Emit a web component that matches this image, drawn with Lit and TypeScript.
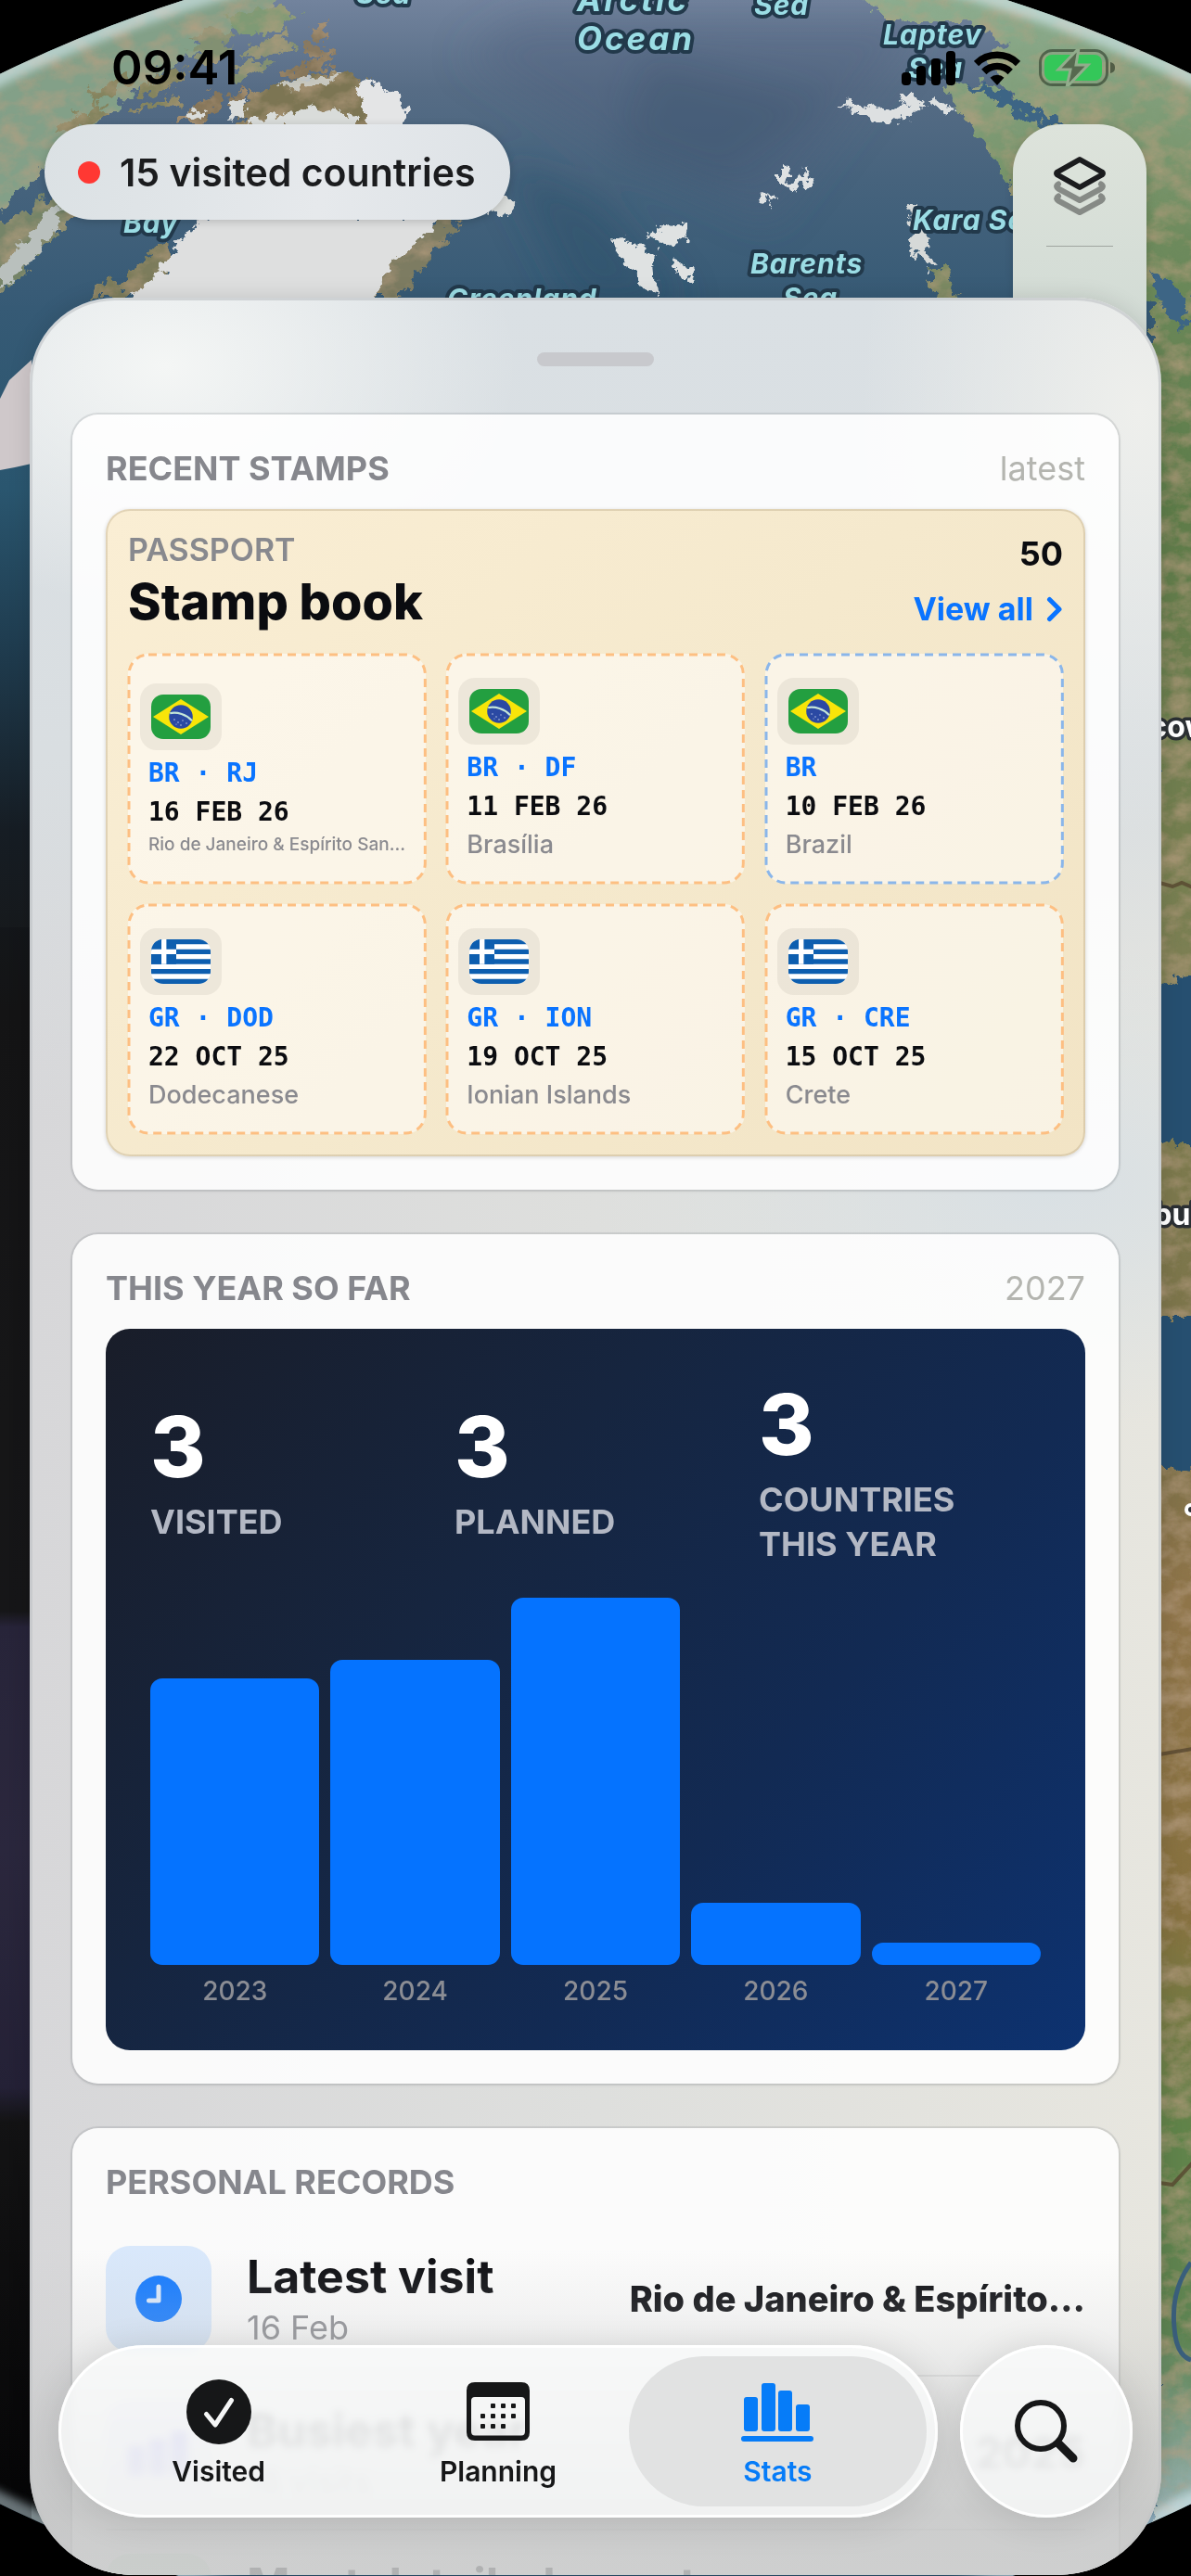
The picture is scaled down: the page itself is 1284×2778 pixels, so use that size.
import { LitElement, html, svg, css } from "lit";
import { customElement, property } from "lit/decorators.js";

type FlagCode = "br" | "gr";

interface Stamp {
  flag: FlagCode;
  code: string;
  date: string;
  place: string;
  small?: boolean;
  whole?: boolean;
}

const STAMPS: Stamp[] = [
  { flag: "br", code: "BR · RJ", date: "16 FEB 26", place: "Rio de Janeiro & Espírito San…", small: true },
  { flag: "br", code: "BR · DF", date: "11 FEB 26", place: "Brasília" },
  { flag: "br", code: "BR", date: "10 FEB 26", place: "Brazil", whole: true },
  { flag: "gr", code: "GR · DOD", date: "22 OCT 25", place: "Dodecanese" },
  { flag: "gr", code: "GR · ION", date: "19 OCT 25", place: "Ionian Islands" },
  { flag: "gr", code: "GR · CRE", date: "15 OCT 25", place: "Crete" },
];

const TOTALS = [
  { value: 3, label: "Visited" },
  { value: 3, label: "Planned" },
  { value: 3, label: "Countries this year" },
];

const YEARS = [
  { year: 2023, share: 78 },
  { year: 2024, share: 83 },
  { year: 2025, share: 100 },
  { year: 2026, share: 17 },
  { year: 2027, share: 6 },
];

const brazil = svg`
  <rect width="64" height="48" rx="13" fill="#239f40"/>
  <path d="M32 5 62 24 32 43 2 24Z" fill="#f8e509"/>
  <circle cx="32" cy="24" r="12.8" fill="#2b49a3"/>
  <path d="M20.2 20.2C28 18.4 38 21.6 44 28.2" fill="none" stroke="#c5e6d8" stroke-width="2.2"/>
  <g fill="#b9c6ea"><circle cx="25" cy="27" r=".8"/><circle cx="29" cy="30" r=".8"/><circle cx="34" cy="28" r=".7"/><circle cx="32" cy="33" r=".8"/><circle cx="38" cy="31" r=".8"/><circle cx="27" cy="32" r=".6"/></g>`;

const greece = svg`
  <clipPath id="g"><rect width="64" height="48" rx="13"/></clipPath>
  <g clip-path="url(#g)">
    <rect width="64" height="48" fill="#fff"/>
    <path d="M0 0h64v5.3H0zM0 10.7h64V16H0zM0 21.3h64v5.4H0zM0 32h64v5.3H0zM0 42.7h64V48H0z" fill="#0d5eaf"/>
    <path d="M0 0h27v26.700H0z" fill="#0d5eaf"/>
    <path d="M11 0h5.400v26.700H11zM0 10.700h27V16H0z" fill="#fff"/>
  </g>`;

@customElement("globe-map")
class GlobeMap extends LitElement {
  static styles = css`
    :host { display: block; height: 100%; }
    .map { display: block; width: 100%; height: 100%; }
    .sea { font: italic 700 30px Inter, "Liberation Sans", sans-serif; letter-spacing: 1px; fill: #9bdde5; stroke: #22394b; stroke-width: 8px; stroke-linejoin: round; paint-order: stroke; }
    .big { font-size: 35px; letter-spacing: 3px; }
    .city { font: 700 32px Inter, "Liberation Sans", sans-serif; fill: #fff; stroke: #2b2f33; stroke-width: 7px; stroke-linejoin: round; paint-order: stroke; }
  `;

  render() {
    return html`
      <svg class="map" viewBox="0 0 1284 2778" preserveAspectRatio="xMidYMin slice" aria-hidden="true">
        <defs>
          <clipPath id="disc"><circle cx="642" cy="1390" r="1459"/></clipPath>
          <linearGradient id="ocean" x1="0" y1="0" x2="0" y2="1">
            <stop offset="0" stop-color="#72839d"/><stop offset=".035" stop-color="#566c85"/>
            <stop offset=".07" stop-color="#46637d"/><stop offset=".12" stop-color="#365a75"/>
            <stop offset="1" stop-color="#264d68"/>
          </linearGradient>
          <linearGradient id="night" x1="0" y1="0" x2="0" y2="1">
            <stop offset="0" stop-color="#365a75"/><stop offset=".08" stop-color="#2a566f"/>
            <stop offset=".15" stop-color="#1f3c4f"/><stop offset=".23" stop-color="#161d24"/>
            <stop offset=".31" stop-color="#171717"/><stop offset=".575" stop-color="#1a1a1b"/>
            <stop offset=".582" stop-color="#2f2b44"/><stop offset=".68" stop-color="#332f49"/>
            <stop offset=".785" stop-color="#2b2740"/><stop offset=".8" stop-color="#161616"/>
            <stop offset="1" stop-color="#020202"/>
          </linearGradient>
          <linearGradient id="east" x1="0" y1="0" x2="0" y2="1">
            <stop offset="0" stop-color="#8faf93"/><stop offset=".05" stop-color="#7f9c77"/>
            <stop offset=".1" stop-color="#6d8a5c"/><stop offset=".2" stop-color="#5d7c4a"/>
            <stop offset=".37" stop-color="#7b7f52"/><stop offset=".56" stop-color="#7d7149"/>
            <stop offset=".62" stop-color="#8f7449"/><stop offset=".74" stop-color="#86713f"/>
            <stop offset=".82" stop-color="#61834a"/><stop offset=".9" stop-color="#5d8352"/>
            <stop offset=".97" stop-color="#9ab3b4"/>
          </linearGradient>
          <filter id="coast" x="-5%" y="-5%" width="110%" height="110%">
            <feTurbulence type="fractalNoise" baseFrequency=".09" numOctaves="4" seed="4"/>
            <feDisplacementMap in="SourceGraphic" scale="22" xChannelSelector="R" yChannelSelector="G"/>
          </filter>
          <filter id="land" x="-5%" y="-5%" width="110%" height="110%">
            <feTurbulence type="fractalNoise" baseFrequency=".08" numOctaves="4" seed="9" result="n"/>
            <feDisplacementMap in="SourceGraphic" in2="n" scale="26" xChannelSelector="R" yChannelSelector="G" result="shape"/>
            <feTurbulence type="fractalNoise" baseFrequency=".035 .05" numOctaves="5" seed="2"/>
            <feColorMatrix values="0 0 0 0 .48  0 0 0 0 .35  0 0 0 0 .22  1.3 0 0 0 -.5"/>
            <feComposite in2="shape" operator="in" result="tint"/>
            <feMerge><feMergeNode in="shape"/><feMergeNode in="tint"/></feMerge>
          </filter>
          <filter id="soft"><feGaussianBlur stdDeviation="20"/></filter>
          <filter id="haze"><feGaussianBlur stdDeviation="5"/></filter>
        </defs>
        <rect width="1284" height="2778" fill="#000"/>
        <g clip-path="url(#disc)">
          <rect width="1284" height="2778" fill="url(#ocean)"/>
          <path d="M0 330H60V2778H0z" fill="url(#night)"/>
          <g filter="url(#soft)">
            <path d="M560 20H1000L830 240 640 150 500 60z" fill="#4d617c" opacity=".4"/>
            <path d="M540 170 620 330H740L650 220z" fill="#2b4d68" opacity=".5"/>
            <path d="M700 60 900 110 780 200 660 170z" fill="#3b536c" opacity=".4"/>
          </g>
          <g filter="url(#land)">
            <path d="M-30 60 200-30H330L270 25 200 60 150 95 80 150 40 190 0 225-40 230z" fill="#83a088"/>
            <path d="M-20 250 60 210 90 222 60 250 20 300-20 340z" fill="#748468"/>
            <path d="M245 20 290 5 322 16 285 38 255 36z" fill="#7f9a75"/>
            <path d="M332 30 352 22 354 44 338 42zM330 48l26 4-4 12-22-6z" fill="#8a7a60"/>
            <path d="M255 60 305 34 318 50 270 64zM230 30l25 8-30 14-22-4zM205 62l30-18 16 8-30 22zM250 74l40-10 4 8-40 14z" fill="#829072"/>
            <path d="M150 92 196 70 198 86 150 104zM140 118l52-16 2 12-48 6zM96 100l40-20 6 10-42 26zM60 135l50-22 8 10-56 24z" fill="#84845f"/>
            <path d="M306 78l50-20 4 12-44 16zM200 118l36-20 6 14-32 22zM246 106l16-12 4 14-16 10z" fill="#86765a"/>
            <path d="M270 100 320 86 360 76 400 92 400 140H250z" fill="#7c7453"/>
            <path d="M190 130l30-14 4 18h-30z" fill="#86765a"/>
            <path d="M146 285 180 262 182 290 150 321H95l20-20 16 10z" fill="#7b7c5c"/>
            <path d="M470 236 500 240 470 270 430 321H395l20-50z" fill="#7d7c62"/>
          </g>
          <g filter="url(#coast)">
            <path d="M382 92 402 86 424 100 438 118 434 142H396L396 118z" fill="#e4e5e6"/>
            <path d="M300 90 330 82 372 80 352 92 312 98z" fill="#d5d8d6" opacity=".8"/>
            <path d="M250 108l16-4-4 24-14 2zM200 126l22-8-4 14zM272 128l44-8 26-6 40 10v14H268z" fill="#d9dcda"/>
            <path d="M225 232H478L452 260 420 285 402 330H130L172 294 190 262z" fill="#dedfdf"/>
            <path d="M540 212 556 218 548 232 530 228z" fill="#d9dcda"/>
            <path d="M52 228 66 222 60 250 20 296 0 310V290z" fill="#b9c0bd"/>
            <path d="M902 112l30 2 20 6 20-8 14 4-6 12-30 6-20-8zM968 104l20 0 14 14-22-2zM1000 104l34 14-10 6-20-12z" fill="#dde0e1"/>
            <path d="M844 176l10 8-4 18-10-4zM846 200l28-12 4 8-22 10zM818 206l16 6-4 8-14-4zM868 180l6 12-8 6zM836 188h8v8h-8z" fill="#dfe2e3"/>
            <path d="M660 256 688 262 706 280 708 318 700 316 686 300 664 272zM702 246l40-6-4 18-26 8-14-8zM722 278l26 12-4 12-14-8z" fill="#dfe2e2"/>
            <path d="M978 222l12-4 8 24 2 34-14-4zM990 264l20 20-8 6-14-12z" fill="#d6d9d8"/>
          </g>
          <path d="M0 430 10 410 34 388V500L16 504 0 507z" fill="#cfc8ca"/>
          <g filter="url(#land)">
            <path d="M900-20H1090L1330 80V2800H1244V330L1100 230 1080 180 1044 132 1018 92 1060 90 1100 110 1060 58 1090 50 1040 22 960 22z" fill="url(#east)"/>
            <path d="M1000 288l20 0 12 40H1010z" fill="#7b8a64"/>
          </g>
          <g filter="url(#coast)">
            <path d="M1040 90 1110 130 1180 150 1124 122 1084 96zM1240 290l40 30-6 40-24-36z" fill="#3d6585"/>
            <path d="M1240 1065 1300 1045V1235L1240 1230zM1240 1420h70v170l-70-10z" fill="#264f70"/>
          </g>
          <path d="M1250 952l14 4 10-4 12 5M1250 1892l36-6M1250 2354l14 2 22-24" fill="none" stroke="#57472f" stroke-width="4" opacity=".8"/>
          <path d="M1284 2440Q1262 2470 1266 2510 1268 2540 1284 2545" fill="none" stroke="#3a5f7c" stroke-width="5"/>
          <circle cx="642" cy="1390" r="1457" fill="none" stroke="#d5ecf3" stroke-width="20" filter="url(#haze)" opacity=".6"/>
          <path d="M0 1000H34V2778H0z" fill="#0c0c0d" opacity=".2"/>
        </g>
        <text class="sea" x="384" y="4">Sea</text>
        <text class="sea big" x="622" y="12">Arctic</text>
        <text class="sea big" x="622" y="54">Ocean</text>
        <text class="sea" x="813" y="16">Sea</text>
        <text class="sea" x="952" y="48">Laptev</text>
        <text class="sea" x="979" y="84">Sea</text>
        <text class="sea" x="984" y="248">Kara Sea</text>
        <text class="sea" x="809" y="295">Barents</text>
        <text class="sea" x="844" y="332">Sea</text>
        <text class="sea" x="482" y="333">Greenland</text>
        <text class="sea" x="133" y="251">Bay</text>
        <text class="city" x="1172" y="795">Moscow</text>
        <text class="city" x="1166" y="1321">Istanbul</text>
        <circle cx="1284" cy="1628" r="5" fill="#2b2f33" stroke="#fff" stroke-width="4"/>
      </svg>`;
  }
}

@customElement("passport-stamp")
class PassportStamp extends LitElement {
  @property({ attribute: false }) stamp!: Stamp;

  static styles = css`
    :host { display: block; min-width: 0; }
    .stamp { position: relative; box-sizing: border-box; height: 248px; padding: 4px 13px 0; border-radius: 22px; background: rgba(255, 255, 255, 0.52); display: flex; flex-direction: column; justify-content: center; }
    .edge { position: absolute; inset: 0; width: 100%; height: 100%; overflow: visible; }
    .edge rect { x: 1px; y: 1px; width: calc(100% - 2px); height: calc(100% - 2px); fill: none; stroke: #fdbf82; stroke-width: 3px; stroke-dasharray: 9 6; }
    .whole .edge rect { stroke: #8ab6ea; }
    .tile { width: 88px; height: 72px; border-radius: 18px; background: rgba(120, 110, 100, 0.1); display: grid; place-items: center; margin-bottom: 4px; }
    .flag { width: 64px; height: 48px; display: block; }
    .line { margin: 0; padding: 0 0 0 9px; font: 700 28px/42px "DejaVu Sans Mono", "Liberation Mono", monospace; color: #0b0c10; white-space: nowrap; }
    .code { color: #0a74ff; }
    .place { font: 500 27px/40px Inter, "Liberation Sans", sans-serif; color: #8a8a8f; overflow: hidden; text-overflow: ellipsis; }
    .small { font-size: 19px; line-height: 28px; }
  `;

  render() {
    const s = this.stamp;
    return html`
      <div class="stamp ${s.whole ? "whole" : ""}">
        <svg class="edge" aria-hidden="true"><rect rx="21"/></svg>
        <div class="tile"><svg class="flag" viewBox="0 0 64 48" aria-hidden="true">${s.flag === "br" ? brazil : greece}</svg></div>
        <p class="line code">${s.code}</p>
        <p class="line">${s.date}</p>
        <p class="line place ${s.small ? "small" : ""}">${s.place}</p>
      </div>`;
  }
}

@customElement("app-root")
class AppRoot extends LitElement {
  static styles = css`
    :host { display: block; height: 100vh; overflow: hidden; font-family: Inter, "Liberation Sans", sans-serif; color: #0b0c10; background: #000; }
    .screen { position: relative; height: 100%; display: flex; flex-direction: column; }
    .backdrop { position: absolute; inset: 0; }
    h2, h3, p { margin: 0; }
    button { font: inherit; color: inherit; border: 0; background: none; padding: 0; cursor: pointer; }
    a { text-decoration: none; }
    ul { list-style: none; margin: 0; padding: 0; }

    .top { position: relative; flex: none; height: 321px; display: flex; flex-direction: column; }
    .status { flex: none; height: 134px; box-sizing: border-box; padding: 12px 82px 0 120px; display: flex; align-items: center; justify-content: space-between; }
    .time { font-size: 51px; line-height: 60px; font-weight: 600; color: #000; }
    .signals { display: flex; gap: 20px; align-items: center; }
    .signals svg { display: block; }
    .controls { display: flex; justify-content: space-between; align-items: flex-start; padding: 0 48px; }
    .pill { height: 103px; border-radius: 52px; padding: 0 38px 0 36px; display: flex; align-items: center; gap: 21px; background: linear-gradient(100deg, #dbe1e4, #e6e9ec 60%, #dde2e6); box-shadow: 0 2px 10px rgba(0, 0, 0, 0.18); font-size: 41px; font-weight: 600; color: #1b1c1e; white-space: nowrap; }
    .dot { width: 24px; height: 24px; border-radius: 50%; background: #ff3833; }
    .tools { width: 144px; height: 280px; box-sizing: border-box; border-radius: 52px 52px 0 0; padding-top: 34px; display: flex; flex-direction: column; align-items: center; gap: 33px; background: linear-gradient(#dde3db, #cfd9d3); box-shadow: 0 2px 10px rgba(0, 0, 0, 0.15); }
    .tools svg { display: block; }
    .rule { width: 72px; height: 1px; background: #a0a5a0; }

    .sheet { position: relative; flex: 1; min-height: 0; margin: 0 32px 1px; border-radius: 92px 92px 112px 112px; overflow: hidden; box-shadow: inset 0 0 0 3px rgba(190, 194, 196, 0.6), 0 0 24px rgba(0, 0, 0, 0.12);
      background:
        radial-gradient(ellipse 380px 260px at 12% 3%, #f4f6f5, rgba(244, 246, 245, 0)),
        radial-gradient(ellipse 300px 460px at 98% 5%, #eeefec, rgba(238, 239, 236, 0)),
        radial-gradient(ellipse 500px 260px at 90% 39%, #d9e0e4, rgba(217, 224, 228, 0)),
        linear-gradient(#dae0e4, #d9dee1 20%, rgba(217, 222, 225, 0) 36%),
        linear-gradient(90deg, #d7d7d9, #dedfdd 50%, #e7e6df); }
    .scroll { box-sizing: border-box; padding: 59px 46px 0; display: flex; flex-direction: column; gap: 48px; }
    .handle { align-self: center; width: 126px; height: 15px; border-radius: 8px; background: #c8c9cd; margin-bottom: 4px; }
    .card { box-sizing: border-box; border-radius: 28px; padding: 36px; background: rgba(255, 255, 255, 0.87); box-shadow: 0 0 0 2px rgba(120, 125, 130, 0.16), 0 1px 4px rgba(0, 0, 0, 0.1); }
    .head { display: flex; justify-content: space-between; margin-bottom: 22px; line-height: 44px; }
    .title { font-size: 36px; font-weight: 700; color: #86878d; text-transform: uppercase; }
    .note { font-size: 36px; font-weight: 400; color: #b4b5b0; }

    .passport { border-radius: 26px; padding: 24px; background: linear-gradient(135deg, #faeed4, #f5e9cd 50%, #f2e4c5); box-shadow: inset 0 0 0 2px rgba(150, 130, 90, 0.24), 0 1px 4px rgba(0, 0, 0, 0.16); }
    .intro { display: flex; justify-content: space-between; margin-bottom: 24px; }
    .names { display: flex; flex-direction: column; gap: 4px; }
    .eyebrow { font-size: 34px; line-height: 40px; font-weight: 600; color: #88898e; text-transform: uppercase; }
    .book { font-size: 54px; line-height: 64px; font-weight: 800; }
    .side { display: flex; flex-direction: column; align-items: flex-end; justify-content: center; gap: 16px; line-height: 44px; }
    .count { font-size: 36px; font-weight: 700; }
    .more { display: flex; align-items: center; gap: 14px; font-size: 34px; font-weight: 700; color: #0a74ff; }
    .stamps { display: grid; grid-template-columns: repeat(3, 1fr); gap: 22px; }

    .year { border-radius: 26px; padding: 48px; color: #fff; background: linear-gradient(130deg, #191d29, #16253f 35%, #122a53 65%, #0d3270); }
    .totals { display: grid; grid-template-columns: repeat(3, 1fr); gap: 24px; align-items: center; min-height: 208px; margin-bottom: 34px; }
    .big { font-size: 91px; line-height: 110px; font-weight: 800; margin-bottom: 2px; }
    .label { max-width: 8em; font-size: 36px; line-height: 48px; font-weight: 700; text-transform: uppercase; color: #b3b8c4; }
    .bars { display: grid; grid-template-columns: repeat(5, 1fr); gap: 12px; }
    .slot { height: 396px; display: flex; align-items: flex-end; margin-bottom: 12px; }
    .bar { width: 100%; border-radius: 13px; background: #0573ff; }
    .tick { text-align: center; font-size: 28px; line-height: 32px; font-weight: 500; color: #8b8d94; }

    .row { display: flex; align-items: center; padding: 25px 0; gap: 38px; border-bottom: 2px solid rgba(60, 60, 67, 0.12); }
    .badge { flex: none; width: 114px; height: 114px; border-radius: 26px; display: grid; place-items: center; background: #d9e8fb; }
    .violet { background: #e6e4fd; }
    .green { background: #dcefdf; }
    .facts { flex: 1; white-space: nowrap; }
    .name { font-size: 50px; line-height: 62px; font-weight: 700; }
    .when { font-size: 36px; line-height: 48px; color: #8e8f94; }
    .value { font-size: 46px; line-height: 56px; font-weight: 700; }
    .long { font-size: 38px; font-weight: 800; }
    .mist { position: absolute; left: 0; right: 0; bottom: 0; height: 350px; pointer-events: none; background: linear-gradient(rgba(206, 207, 207, 0), rgba(202, 203, 203, 0.22) 24%, rgba(198, 199, 199, 0.5) 46%, rgba(196, 197, 197, 0.86) 80%, rgba(200, 201, 201, 0.88)); }

    .dock { position: absolute; left: 63px; right: 63px; bottom: 63px; display: flex; gap: 24px; }
    .tabs, .search { box-sizing: border-box; height: 186px; border-radius: 93px; background: rgba(250, 251, 251, 0.8); backdrop-filter: blur(4px); box-shadow: inset 0 0 0 3px rgba(255, 255, 255, 0.9), 0 4px 40px rgba(0, 0, 0, 0.12); }
    .tabs { flex: 1; padding: 12px 22px; display: grid; grid-template-columns: repeat(3, 1fr); }
    .tab { margin: 0 -10px; border-radius: 81px; display: flex; flex-direction: column; align-items: center; justify-content: center; gap: 8px; padding-top: 5px; font-size: 30px; line-height: 40px; font-weight: 600; color: #161718; }
    .on { background: rgba(222, 223, 223, 0.92); color: #067cf8; }
    .tab svg { display: block; height: 72px; }
    .search { flex: none; width: 186px; display: grid; place-items: center; }
  `;

  render() {
    return html`
      <main class="screen">
        <globe-map class="backdrop"></globe-map>
        <header class="top">
          <div class="status">
            <span class="time">09:41</span>
            <div class="signals">
              <svg width="58" height="38" viewBox="0 0 58 38" role="img" aria-label="Signal"><rect y="24" width="10" height="14" rx="4"/><rect x="16" y="17" width="10" height="21" rx="4"/><rect x="32" y="9" width="10" height="29" rx="4"/><rect x="48" y="1" width="10" height="37" rx="4"/></svg>
              <svg width="50" height="38" viewBox="0 0 50 38" role="img" aria-label="Wi-Fi"><g fill="none" stroke="#000" stroke-width="7.500"><path d="M2.500 14.500A32 32 0 0 1 47.500 14.500"/><path d="M10.800 23.500A20 20 0 0 1 39.200 23.500"/></g><path d="M25 38 17.500 29.800A11 11 0 0 1 32.500 29.800Z"/></svg>
              <svg width="82" height="40" viewBox="0 0 82 40" role="img" aria-label="Battery charging"><rect x="1.500" y="1.500" width="72" height="37" rx="13" fill="none" stroke="#20301f" stroke-opacity=".55" stroke-width="3"/><path d="M77 14c4 1 5 3 5 6s-1 5-5 6z" fill="#20301f" fill-opacity=".6"/><rect x="6" y="6" width="62" height="28" rx="8" fill="#34c759"/><path d="M43-1 21 22H34L30 41 53 17H40Z" fill="#56694f" stroke="#92ad8c" stroke-width="3"/></svg>
            </div>
          </div>
          <div class="controls">
            <button class="pill"><span class="dot"></span>15 visited countries</button>
            <div class="tools">
              <button aria-label="Map layers">
                <svg width="58" height="64" viewBox="0 0 58 64" fill="none" stroke-width="6" stroke-linejoin="round" stroke-linecap="round">
                  <g stroke="#868a86"><path d="M6 30.500C3 32.500 4 34 6 35.500L29 48 52 35.500C54 34 55 32.500 52 30.500"/><path d="M6 43.500C3 45.500 4 47 6 48.500L29 61 52 48.500C54 47 55 45.500 52 43.500"/></g>
                  <path d="M29 4 53 17.500Q55 19 53 20.500L29 34 5 20.500Q3 19 5 17.500Z" fill="#dbe2da" stroke="#1b1c1e"/>
                </svg>
              </button>
              <div class="rule"></div>
            </div>
          </div>
        </header>

        <section class="sheet">
          <div class="scroll">
            <div class="handle"></div>

            <section class="card">
              <div class="head"><h2 class="title">Recent stamps</h2><span class="note">latest</span></div>
              <div class="passport">
                <div class="intro">
                  <div class="names"><p class="eyebrow">Passport</p><h3 class="book">Stamp book</h3></div>
                  <div class="side">
                    <span class="count">50</span>
                    <a class="more" href="#stamps">View all
                      <svg width="18" height="28" viewBox="0 0 18 28" fill="none" stroke="currentColor" stroke-width="5" stroke-linecap="round" stroke-linejoin="round" aria-hidden="true"><path d="M3.500 3.500 14 14 3.500 24.500"/></svg>
                    </a>
                  </div>
                </div>
                <div class="stamps">${STAMPS.map((s) => html`<passport-stamp .stamp=${s}></passport-stamp>`)}</div>
              </div>
            </section>

            <section class="card">
              <div class="head"><h2 class="title">This year so far</h2><span class="note">2027</span></div>
              <div class="year">
                <div class="totals">
                  ${TOTALS.map((t) => html`<div><p class="big">${t.value}</p><p class="label">${t.label}</p></div>`)}
                </div>
                <div class="bars">
                  ${YEARS.map((y) => html`<div><div class="slot"><div class="bar" style="height:${y.share}%"></div></div><p class="tick">${y.year}</p></div>`)}
                </div>
              </div>
            </section>

            <section class="card">
              <div class="head"><h2 class="title">Personal records</h2></div>
              <ul>
                <li class="row">
                  <span class="badge"><svg width="50" height="50" viewBox="0 0 50 50" aria-hidden="true"><circle cx="25" cy="25" r="25" fill="#147aff"/><path d="M25 12V27H14.500" fill="none" stroke="#d9e8fb" stroke-width="5" stroke-linecap="round" stroke-linejoin="round"/></svg></span>
                  <div class="facts"><p class="name">Latest visit</p><p class="when">16 Feb</p></div>
                  <span class="value long">Rio de Janeiro &amp; Espírito…</span>
                </li>
                <li class="row">
                  <span class="badge violet"><svg width="66" height="50" viewBox="0 0 66 50" fill="#5b58f0" aria-hidden="true"><rect y="18" width="18" height="32" rx="3"/><rect x="23" y="10" width="18" height="40" rx="3"/><rect x="46" y="2" width="18" height="48" rx="3"/></svg></span>
                  <div class="facts"><p class="name">Busiest year</p><p class="when">18 visits</p></div>
                  <span class="value">2025</span>
                </li>
                <li class="row">
                  <span class="badge green"></span>
                  <div class="facts"><p class="name">Most detailed country</p><p class="when">&nbsp;</p></div>
                </li>
              </ul>
            </section>
          </div>
          <div class="mist"></div>
        </section>

        <nav class="dock" aria-label="Main">
          <div class="tabs">
            <button class="tab">
              <svg width="72" height="72" viewBox="0 0 72 72" aria-hidden="true"><circle cx="36" cy="36" r="35" fill="#161718"/><path d="M22.500 38.500 32 50 49.500 23.500" fill="none" stroke="#f5f6f6" stroke-width="5" stroke-linecap="round" stroke-linejoin="round"/></svg>
              Visited
            </button>
            <button class="tab">
              <svg width="72" height="72" viewBox="0 0 72 72" fill="#161718" aria-hidden="true">
                <path fill-rule="evenodd" d="M11 4H61Q70 4 70 13V58Q70 67 61 67H11Q2 67 2 58V13Q2 4 11 4ZM11 20Q7 20 7 24V57Q7 61.500 11 61.500H61Q65 61.500 65 57V24Q65 20 61 20Z"/>
                <rect x="28" y="27" width="5" height="5" rx="1"/><rect x="39" y="27" width="5" height="5" rx="1"/><rect x="50" y="27" width="5" height="5" rx="1"/>
                <rect x="17" y="38" width="5" height="5" rx="1"/><rect x="28" y="38" width="5" height="5" rx="1"/><rect x="39" y="38" width="5" height="5" rx="1"/><rect x="50" y="38" width="5" height="5" rx="1"/>
                <rect x="17" y="49" width="5" height="5" rx="1"/><rect x="28" y="49" width="5" height="5" rx="1"/><rect x="39" y="49" width="5" height="5" rx="1"/>
              </svg>
              Planning
            </button>
            <button class="tab on" aria-current="page">
              <svg width="78" height="72" viewBox="0 0 78 72" fill="currentColor" aria-hidden="true"><rect x="3" y="20" width="15" height="37" rx="3"/><rect x="22" y="5" width="15" height="52" rx="3"/><rect x="40" y="13" width="15" height="44" rx="3"/><rect x="59" y="28" width="15" height="29" rx="3"/><rect x="0" y="62" width="78" height="6" rx="3"/></svg>
              Stats
            </button>
          </div>
          <button class="search" aria-label="Search">
            <svg width="70" height="70" viewBox="0 0 70 70" fill="none" stroke="#161718" stroke-linecap="round" aria-hidden="true"><circle cx="29" cy="29" r="25" stroke-width="6"/><path d="M48 48 64 64" stroke-width="9"/></svg>
          </button>
        </nav>
      </main>`;
  }
}
